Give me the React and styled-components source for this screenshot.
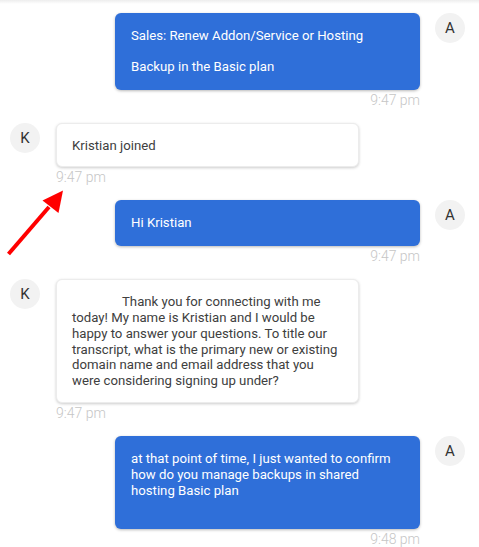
import React from "react";
import styled, { createGlobalStyle, css } from "styled-components";

const GlobalStyle = createGlobalStyle`
  html, body {
    margin: 0;
    padding: 0;
    background: #ffffff;
  }
  body {
    font-family: Roboto, "Noto Sans", Arial, sans-serif;
    -webkit-font-smoothing: antialiased;
  }
`;

const messages = [
  {
    id: 1,
    from: "agent",
    initial: "A",
    paragraphs: ["Sales: Renew Addon/Service or Hosting", "Backup in the Basic plan"],
    time: "9:47 pm",
  },
  {
    id: 2,
    from: "customer",
    initial: "K",
    paragraphs: ["Kristian joined"],
    time: "9:47 pm",
  },
  {
    id: 3,
    from: "agent",
    initial: "A",
    paragraphs: ["Hi Kristian"],
    time: "9:47 pm",
  },
  {
    id: 4,
    from: "customer",
    initial: "K",
    indent: true,
    paragraphs: [
      "Thank you for connecting with me today! My name is Kristian and I would be happy to answer your questions. To title our transcript, what is the primary new or existing domain name and email address that you were considering signing up under?",
    ],
    time: "9:47 pm",
  },
  {
    id: 5,
    from: "agent",
    initial: "A",
    trailingBreak: true,
    paragraphs: [
      "at that point of time, I just wanted to confirm how do you manage backups in shared hosting Basic plan",
    ],
    time: "9:48 pm",
  },
];

export default function App() {
  return (
    <>
      <GlobalStyle />
      <Page>
        {messages.map((m) => (
          <Message key={m.id} message={m} />
        ))}
        <Pointer viewBox="0 0 80 80" width="80" height="80">
          <line x1="8.5" y1="74" x2="49" y2="27" stroke="#ff0000" strokeWidth="4" />
          <polygon points="63,10.5 42.5,20.5 58.5,33" fill="#ff0000" />
        </Pointer>
      </Page>
    </>
  );
}

function Message({ message }) {
  const mine = message.from === "agent";
  const last = message.paragraphs.length - 1;
  return (
    <Row $mine={mine}>
      {!mine && <Avatar>{message.initial}</Avatar>}
      <Column $mine={mine}>
        <Bubble $mine={mine} $indent={message.indent}>
          {message.paragraphs.map((p, i) => (
            <Para key={i}>
              {p}
              {message.trailingBreak && i === last && (
                <>
                  <br />
                  &nbsp;
                </>
              )}
            </Para>
          ))}
        </Bubble>
        <Time $mine={mine}>{message.time}</Time>
      </Column>
      {mine && <Avatar>{message.initial}</Avatar>}
    </Row>
  );
}

const Page = styled.div`
  position: relative;
  display: flex;
  flex-direction: column;
  padding: 13px 14px 0 10px;
  height: 547px;
  overflow: hidden;
  box-sizing: border-box;

  &::before {
    content: "";
    position: absolute;
    top: 0;
    left: 0;
    right: 0;
    height: 4px;
    background: linear-gradient(to bottom, rgba(0, 0, 0, 0.07), rgba(0, 0, 0, 0));
  }
`;

const Row = styled.div`
  display: flex;
  align-items: flex-start;
  justify-content: ${(p) => (p.$mine ? "flex-end" : "flex-start")};
  gap: ${(p) => (p.$mine ? "15px" : "16px")};
  margin-bottom: 15px;
  flex: none;
`;

const Avatar = styled.div`
  width: 30px;
  height: 30px;
  flex: none;
  border-radius: 50%;
  background: #f2f2f2;
  color: #333333;
  font-size: 15px;
  display: flex;
  align-items: center;
  justify-content: center;
`;

const Column = styled.div`
  display: flex;
  flex-direction: column;
  align-items: ${(p) => (p.$mine ? "flex-end" : "flex-start")};
  width: ${(p) => (p.$mine ? "305px" : "303px")};
`;

const Bubble = styled.div`
  width: 100%;
  box-sizing: border-box;
  padding: 15px 16px;
  border-radius: 6px;
  font-size: 13.2px;
  line-height: 15.8px;
  display: flex;
  flex-direction: column;
  gap: 15px;

  ${(p) =>
    p.$mine
      ? css`
          background: #2f6fd9;
          color: #ffffff;
          box-shadow: 0 1px 3px rgba(0, 0, 0, 0.28);
        `
      : css`
          background: #ffffff;
          color: #404040;
          border: 1px solid #ececec;
          padding: 14px 13px 13px 15px;
          box-shadow: 0 1px 3px rgba(0, 0, 0, 0.2);
        `}

  ${(p) =>
    p.$indent &&
    css`
      text-indent: 50px;
    `}
`;

const Para = styled.p`
  margin: 0;
`;

const Time = styled.div`
  margin-top: 2px;
  font-size: 14px;
  line-height: 16px;
  font-weight: 300;
  color: #c6c6c6;
  text-align: ${(p) => (p.$mine ? "right" : "left")};
`;

const Pointer = styled.svg`
  position: absolute;
  left: 0;
  top: 180px;
  pointer-events: none;
`;
